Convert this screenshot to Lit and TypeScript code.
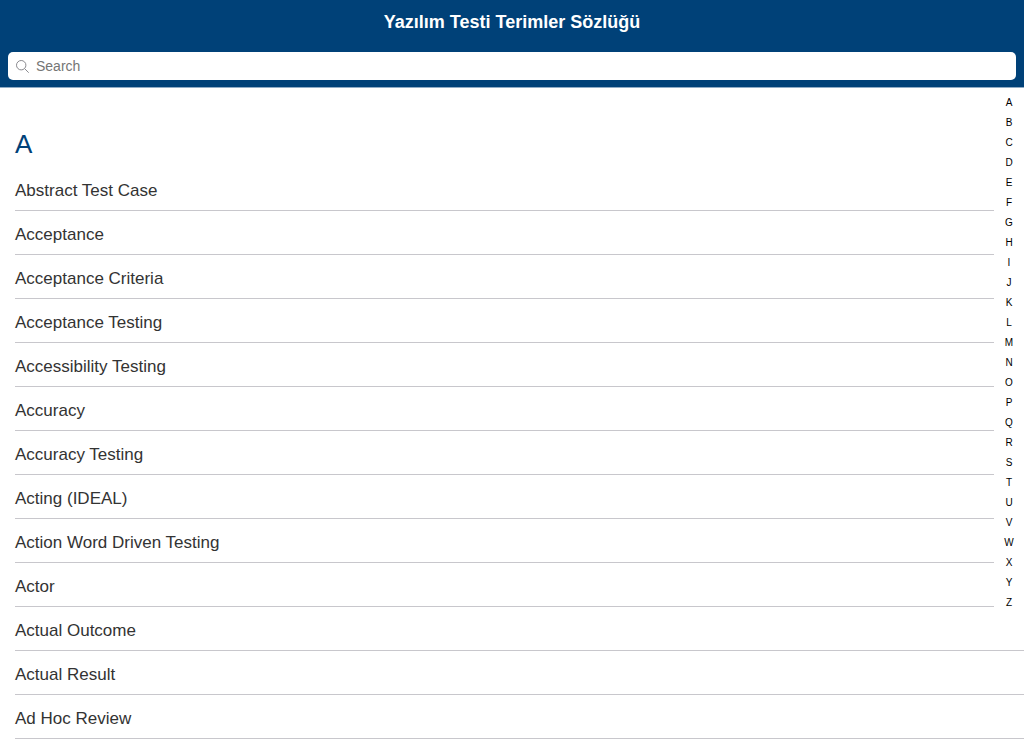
import { LitElement, html, css } from "lit";
import { customElement, state } from "lit/decorators.js";

const TERMS = [
  "Abstract Test Case",
  "Acceptance",
  "Acceptance Criteria",
  "Acceptance Testing",
  "Accessibility Testing",
  "Accuracy",
  "Accuracy Testing",
  "Acting (IDEAL)",
  "Action Word Driven Testing",
  "Actor",
  "Actual Outcome",
  "Actual Result",
  "Ad Hoc Review",
];

const LETTERS = "ABCDEFGHIJKLMNOPQRSTUVWXYZ".split("");

@customElement("app-root")
export class AppRoot extends LitElement {
  @state() private query = "";

  static styles = css`
    :host {
      display: block;
      min-height: 100vh;
      background: #fff;
      color: #333;
      font-family: "Liberation Sans", Arial, sans-serif;
      font-size: 17px;
    }
    .navbar {
      background: #004178;
      color: #fff;
      text-align: center;
    }
    .title {
      margin: 0;
      font-size: 18px;
      font-weight: 700;
      line-height: 44px;
    }
    .searchbar {
      padding: 8px 8px 7px;
      background: #004178;
      border-bottom: 1px solid #8fabc5;
    }
    .field {
      display: flex;
      align-items: center;
      gap: 7px;
      height: 28px;
      padding: 0 8px;
      background: #fff;
      border-radius: 5px;
    }
    .icon {
      flex: none;
      width: 13px;
      height: 13px;
    }
    .input {
      flex: 1;
      min-width: 0;
      height: 28px;
      padding: 0;
      border: 0;
      outline: 0;
      background: transparent;
      color: #333;
      font: inherit;
      font-size: 14px;
    }
    .input::placeholder {
      color: #757575;
      opacity: 1;
    }
    .content {
      position: relative;
      padding: 38px 0 0 15px;
    }
    .letter {
      margin: 0;
      color: #004178;
      font-size: 26px;
      font-weight: 400;
      line-height: 36px;
    }
    .terms {
      margin: 5px 0 0;
      padding: 0;
      list-style: none;
    }
    .term {
      display: block;
      padding: 14px 0 9px;
      line-height: 20px;
      border-bottom: 1px solid #c8c7cc;
      color: inherit;
      text-decoration: none;
    }
    .index {
      position: absolute;
      top: 0;
      right: 0;
      display: flex;
      flex-direction: column;
      width: 30px;
      padding: 5px 0;
      background: #fff;
      text-align: center;
    }
    .jump {
      color: #000;
      font-size: 10px;
      line-height: 20px;
      text-decoration: none;
    }
  `;

  private onInput(e: Event) {
    this.query = (e.target as HTMLInputElement).value;
  }

  render() {
    const q = this.query.trim().toLowerCase();
    const shown = TERMS.filter((t) => t.toLowerCase().includes(q));
    return html`
      <header class="navbar">
        <h1 class="title">Yazılım Testi Terimler Sözlüğü</h1>
      </header>
      <form class="searchbar" role="search" @submit=${(e: Event) => e.preventDefault()}>
        <label class="field">
          <svg class="icon" viewBox="0 0 13 13" fill="none" stroke="#8a8a8f" aria-hidden="true">
            <circle cx="5.2" cy="5.2" r="4.7" />
            <path d="M8.6 8.6 12.7 12.7" />
          </svg>
          <input class="input" type="text" placeholder="Search" aria-label="Search" .value=${this.query} @input=${this.onInput} />
        </label>
      </form>
      <main class="content">
        <h2 class="letter">A</h2>
        <ul class="terms">
          ${shown.map((t) => html`<li><a class="term" href="#">${t}</a></li>`)}
        </ul>
        <nav class="index" aria-label="Index">
          ${LETTERS.map((l) => html`<a class="jump" href="#${l}">${l}</a>`)}
        </nav>
      </main>
    `;
  }
}
